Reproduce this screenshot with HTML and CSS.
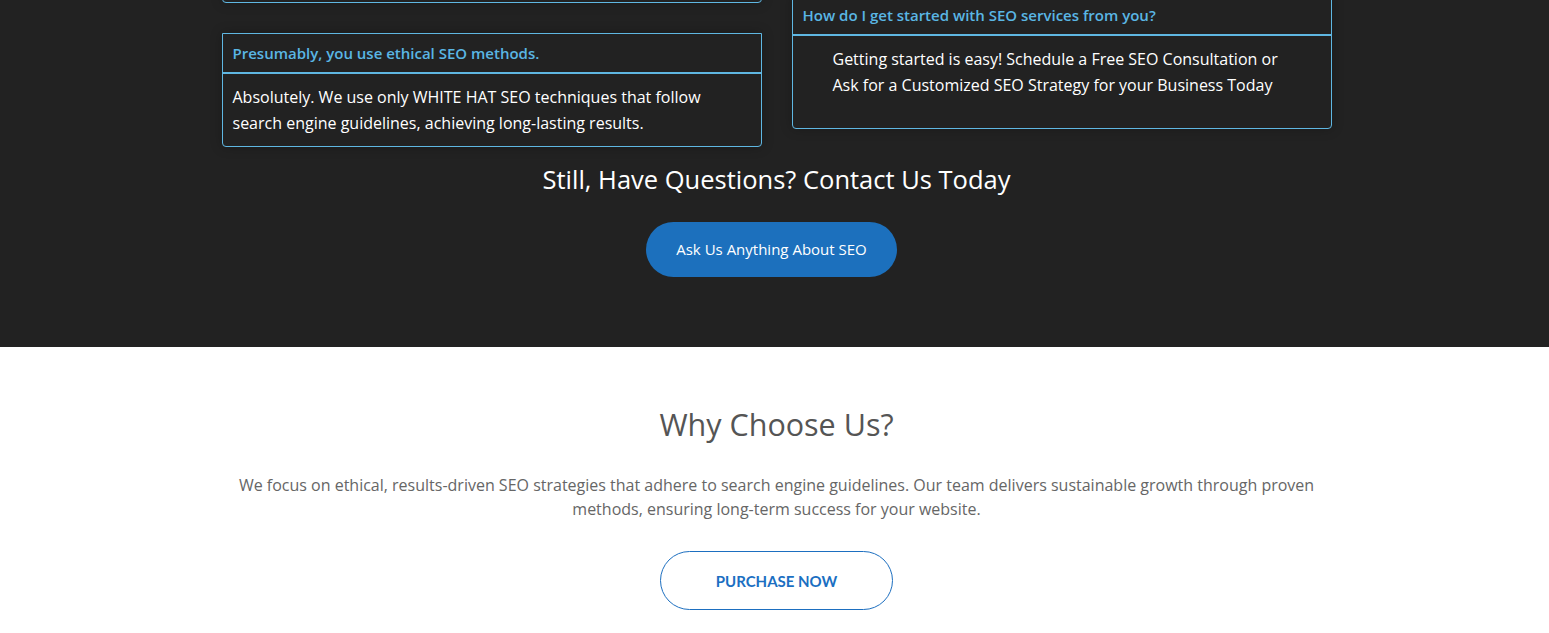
FILE: index.html
```html
<!DOCTYPE html>
<html lang="en">
<head>
<meta charset="utf-8">
<title>SEO FAQ</title>
<link rel="stylesheet" href="styles.css">
</head>
<body>
<section class="faq">
  <div class="container">
    <div class="faq-grid">
      <div class="faq-col">
        <div class="card card-stub"></div>
        <div class="card">
          <div class="card-head">Presumably, you use ethical SEO methods.</div>
          <div class="card-body">Absolutely. We use only WHITE HAT SEO techniques that follow search engine guidelines, achieving long-lasting results.</div>
        </div>
      </div>
      <div class="faq-col">
        <div class="card">
          <div class="card-head">How do I get started with SEO services from you?</div>
          <div class="card-body card-body-indent">Getting started is easy! Schedule a Free SEO Consultation or Ask for a Customized SEO Strategy for your Business Today</div>
        </div>
      </div>
    </div>
    <h2 class="contact-title">Still, Have Questions? Contact Us Today</h2>
    <div class="center">
      <a class="btn-ask" href="#">Ask Us Anything About SEO</a>
    </div>
  </div>
</section>
<section class="why">
  <div class="container">
    <h2 class="why-title">Why Choose Us?</h2>
    <p class="why-text">We focus on ethical, results-driven SEO strategies that adhere to search engine guidelines. Our team delivers sustainable growth through proven methods, ensuring long-term success for your website.</p>
    <div class="center">
      <a class="btn-purchase" href="#">PURCHASE NOW</a>
    </div>
  </div>
</section>
</body>
</html>
```

FILE: styles.css
```css
* { box-sizing: border-box; }
html, body { margin: 0; padding: 0; }
body {
  font-family: "Open Sans", "Liberation Sans", sans-serif;
  background: #ffffff;
}
.container {
  width: 1110px;
  margin-left: calc(50% - 553px);
}
.faq {
  background: #222222;
  padding-bottom: 70px;
}
.faq-grid {
  display: grid;
  grid-template-columns: 540px 540px;
  column-gap: 30px;
  align-items: start;
  margin-top: -5px;
}
.faq-col {
  display: flex;
  flex-direction: column;
  gap: 30px;
}
.card {
  border: 1px solid #5fb7e2;
  border-radius: 0 0 4px 4px;
  box-shadow: 0 0 12px rgba(0,0,0,0.25);
}
.card-stub {
  height: 8px;
}
.card-head {
  color: #5ab6e4;
  font-weight: 600;
  font-size: 15px;
  line-height: 20px;
  padding: 9px 10px;
  border-bottom: 2px solid #5fb7e2;
}
.card-body {
  color: #ffffff;
  font-size: 16px;
  line-height: 26px;
  padding: 10px;
}
.card-body-indent {
  padding: 10px 40px 30px 40px;
}
.contact-title {
  margin: 14px 0 0;
  text-align: center;
  color: #ffffff;
  font-size: 25.5px;
  font-weight: 500;
  line-height: 36px;
}
.center {
  display: flex;
  justify-content: center;
}
.btn-ask {
  margin-top: 25px;
  margin-right: 10px;
  display: flex;
  align-items: center;
  justify-content: center;
  height: 55px;
  padding: 0 30px 2px;
  border-radius: 28px;
  background: #1c70bd;
  color: #ffffff;
  font-size: 15px;
  text-decoration: none;
}
.why {
  padding-top: 55px;
  padding-bottom: 40px;
}
.why-title {
  margin: 0;
  text-align: center;
  color: #555555;
  font-size: 30.5px;
  font-weight: 400;
  line-height: 44px;
}
.why-text {
  margin: 27px 0 0;
  text-align: center;
  color: #666666;
  font-size: 16px;
  line-height: 24px;
}
.btn-purchase {
  margin-top: 30px;
  display: flex;
  align-items: center;
  justify-content: center;
  width: 233px;
  height: 59px;
  border: 1px solid #1d6fc0;
  border-radius: 30px;
  color: #1b6fc2;
  font-family: Lato, "Open Sans", sans-serif;
  font-weight: 700;
  font-size: 15px;
  text-decoration: none;
}
```
